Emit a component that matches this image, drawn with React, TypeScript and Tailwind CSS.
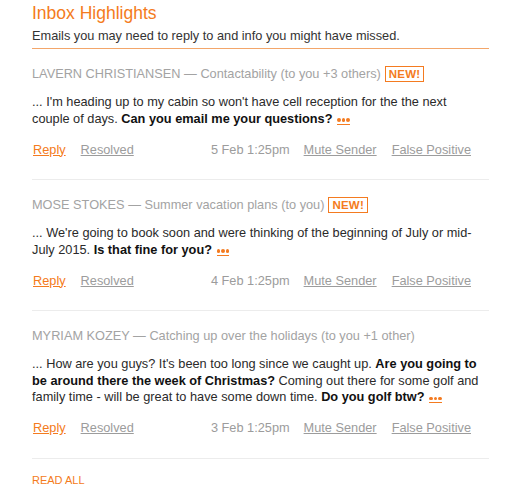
import React from "react";

type Highlight = {
  sender: string;
  subject: string;
  to: string;
  isNew: boolean;
  body: React.ReactNode;
  date: string;
};

const HIGHLIGHTS: Highlight[] = [
  {
    sender: "LAVERN CHRISTIANSEN",
    subject: "Contactability",
    to: "(to you +3 others)",
    isNew: true,
    date: "5 Feb 1:25pm",
    body: (
      <>
        ... I'm heading up to my cabin so won't have cell reception for the the next couple of days.{" "}
        <b className="font-bold text-[#111]">Can you email me your questions?</b>
      </>
    ),
  },
  {
    sender: "MOSE STOKES",
    subject: "Summer vacation plans",
    to: "(to you)",
    isNew: true,
    date: "4 Feb 1:25pm",
    body: (
      <>
        ... We're going to book soon and were thinking of the beginning of July or mid-July 2015.{" "}
        <b className="font-bold text-[#111]">Is that fine for you?</b>
      </>
    ),
  },
  {
    sender: "MYRIAM KOZEY",
    subject: "Catching up over the holidays",
    to: "(to you +1 other)",
    isNew: false,
    date: "3 Feb 1:25pm",
    body: (
      <>
        ... How are you guys? It's been too long since we caught up.{" "}
        <b className="font-bold text-[#111]">Are you going to be around there the week of Christmas?</b> Coming out
        there for some golf and family time - will be great to have some down time.{" "}
        <b className="font-bold text-[#111]">Do you golf btw?</b>
      </>
    ),
  },
];

function More() {
  return (
    <span className="ml-[1px] inline-flex items-center gap-[1px] border-b-[1.5px] border-[#f47b20] pb-[2px] align-[1px]">
      <span className="h-[3.5px] w-[3.5px] rounded-full bg-[#f47b20]" />
      <span className="h-[3.5px] w-[3.5px] rounded-full bg-[#f47b20]" />
      <span className="h-[3.5px] w-[3.5px] rounded-full bg-[#f47b20]" />
    </span>
  );
}

function HighlightRow({ h }: { h: Highlight }) {
  return (
    <div className="border-b border-[#ececec] pt-[16px] pb-[21.5px]">
      <div className="flex items-center text-[12.75px] leading-[17px] text-[#a3a3a3]">
        <span>
          {h.sender} — {h.subject} {h.to}
        </span>
        {h.isNew && (
          <span className="ml-[4px] border-[1.5px] border-[#f47b20] px-[3px] text-[11.5px] leading-[14px] font-bold tracking-[0.2px] text-[#f47b20]">
            NEW!
          </span>
        )}
      </div>
      <p className="mt-[12px] pr-[10px] text-[12.75px] leading-[16.5px] text-[#2a2a2a]">
        {h.body} <More />
      </p>
      <div className="mt-[13.5px] flex items-center pr-[18px] text-[12.75px] leading-[17px] text-[#9c9c9c]">
        <a href="#" className="ml-[1px] text-[#f47b20] underline">
          Reply
        </a>
        <a href="#" className="ml-[15px] underline">
          Resolved
        </a>
        <span className="ml-auto">{h.date}</span>
        <a href="#" className="ml-[14px] underline">
          Mute Sender
        </a>
        <a href="#" className="ml-[15px] underline">
          False Positive
        </a>
      </div>
    </div>
  );
}

export default function App() {
  return (
    <div className="min-h-screen bg-white pl-[32px] pr-[17px] font-['Liberation_Sans',Arial,sans-serif]">
      <h1 className="pt-[2px] text-[17.5px] leading-[22px] text-[#f47b20]">Inbox Highlights</h1>
      <p className="mt-[3px] border-b border-[#f3a66a] pb-[4px] text-[12.75px] leading-[17px] text-[#333]">
        Emails you may need to reply to and info you might have missed.
      </p>
      {HIGHLIGHTS.map((h) => (
        <HighlightRow key={h.sender} h={h} />
      ))}
      <a href="#" className="mt-[15px] block text-[11px] leading-[13px] text-[#f47b20]">
        READ ALL
      </a>
    </div>
  );
}
